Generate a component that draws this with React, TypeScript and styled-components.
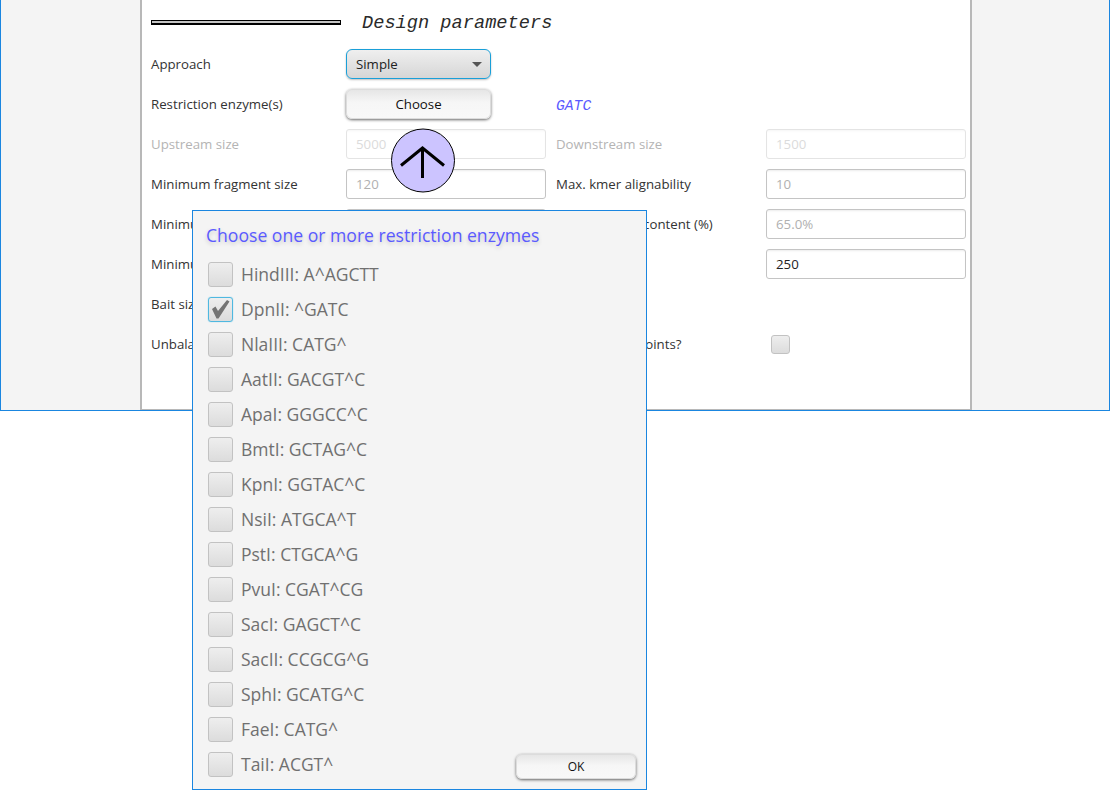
import React from 'react';
import styled, { createGlobalStyle } from 'styled-components';

const GlobalStyle = createGlobalStyle`
  html, body {
    margin: 0;
    padding: 0;
    background: #fff;
    font-family: "Open Sans", "Noto Sans", sans-serif;
  }
`;

// Styled-components

const Page = styled.div`
  position: relative;
  width: 1110px;
  height: 790px;
  overflow: hidden;
`;

const Frame = styled.div`
  box-sizing: border-box;
  height: 411px;
  padding: 0 137px 0 139px;
  background: #f4f4f4;
  border: 1px solid #1a86e0;
  border-top: 0;
`;

const Panel = styled.div`
  box-sizing: border-box;
  height: 100%;
  padding: 0 5px 0 9px;
  background: #fff;
  border: 2px solid #b8b8b8;
  border-width: 0 2px 1px;
`;

const Heading = styled.div`
  display: flex;
  align-items: center;
  gap: 21px;
  height: 44px;
`;

const Rule = styled.div`
  box-sizing: border-box;
  width: 190px;
  height: 5px;
  background: #c4c4c4;
  border: solid #000;
  border-width: 1px 1px 2px;
`;

const HeadingText = styled.span`
  padding-top: 2px;
  font: italic 18.67px "Liberation Mono", monospace;
  color: #2a2a2a;
`;

const Form = styled.div`
  display: grid;
  grid-template-columns: 195px 210px 210px 200px;
  grid-auto-rows: 40px;
  align-items: center;
`;

const Label = styled.span<{ $off?: boolean }>`
  font-size: 13.25px;
  white-space: nowrap;
  color: ${(p) => (p.$off ? '#b4b4b4' : '#333')};
`;

const Combo = styled.div`
  box-sizing: border-box;
  display: flex;
  align-items: center;
  justify-content: space-between;
  width: 145px;
  height: 30px;
  padding: 0 8px 0 9px;
  font-size: 13.25px;
  color: #222;
  background: linear-gradient(#efefef, #d6d6d6);
  border: 1px solid #1a9fd8;
  border-radius: 6px;
  box-shadow: 0 1px 2px rgba(0, 0, 0, 0.25);
`;

const Caret = styled.span`
  width: 0;
  height: 0;
  border: solid transparent;
  border-width: 5px 5.5px 0;
  border-top-color: #555;
`;

const Button = styled.button<{ $w: number; $h: number; $fs: number }>`
  box-sizing: border-box;
  width: ${(p) => p.$w}px;
  height: ${(p) => p.$h}px;
  padding: 0;
  font-family: inherit;
  font-size: ${(p) => p.$fs}px;
  color: #111;
  background: linear-gradient(#e6e6e6, #f6f6f6 45%, #f8f8f8);
  border: 1px solid #dcdcdc;
  border-radius: 6px;
  box-shadow: 0 1px 3px rgba(0, 0, 0, 0.6);
`;

const Value = styled.span`
  padding-top: 3px;
  font: italic 14.67px "Liberation Mono", monospace;
  color: #5a5aff;
`;

const Field = styled.div<{ $off?: boolean; $hint?: boolean }>`
  box-sizing: border-box;
  display: flex;
  align-items: center;
  width: 200px;
  height: 30px;
  padding: 0 9px;
  font-size: 13.25px;
  color: ${(p) => (p.$hint ? '#b0b0b0' : '#222')};
  background: #fff;
  border: 1px solid #c4c4c4;
  border-radius: 3px;
  box-shadow: inset 0 2px 2px -1px rgba(0, 0, 0, 0.08);
  opacity: ${(p) => (p.$off ? 0.45 : 1)};
`;

const Box = styled.span<{ $size: number; $on?: boolean }>`
  box-sizing: border-box;
  flex: none;
  display: flex;
  align-items: center;
  justify-content: center;
  width: ${(p) => p.$size}px;
  height: ${(p) => p.$size}px;
  background: linear-gradient(#eeeeee, #dcdcdc);
  border: 1px solid ${(p) => (p.$on ? '#4fb8e0' : '#c2c2c2')};
  border-radius: 3px;
  box-shadow: ${(p) => (p.$on ? '0 0 1px #4fb8e0' : 'none')};
`;

const SmallBoxCell = styled.div`
  padding-left: 5px;
  display: flex;
`;

const Circle = styled.div`
  position: absolute;
  left: 391px;
  top: 128px;
  width: 64px;
  height: 65px;
`;

const Dialog = styled.div`
  position: absolute;
  left: 192px;
  top: 210px;
  box-sizing: border-box;
  width: 455px;
  height: 580px;
  padding: 0 10px 0 15px;
  background: #f4f4f4;
  border: 1px solid #1a86e0;
`;

const DialogTitle = styled.div`
  height: 46px;
  padding-top: 12px;
  box-sizing: border-box;
  margin-left: -2px;
  font-size: 17.6px;
  line-height: 25px;
  white-space: nowrap;
  color: #5a5aff;
  text-shadow: 0 2px 4px rgba(0, 0, 0, 0.2);
`;

const EnzymeList = styled.div`
  display: flex;
  flex-direction: column;
`;

const EnzymeRow = styled.div`
  display: flex;
  align-items: center;
  gap: 8px;
  height: 35px;
`;

const EnzymeName = styled.span`
  padding-bottom: 2px;
  font-size: 17.5px;
  color: #707070;
`;

const OkWrap = styled.div`
  margin-left: auto;
  padding-top: 3px;
`;

// Data

const enzymes = [
  'HindIII: A^AGCTT',
  'DpnII: ^GATC',
  'NlaIII: CATG^',
  'AatII: GACGT^C',
  'ApaI: GGGCC^C',
  'BmtI: GCTAG^C',
  'KpnI: GGTAC^C',
  'NsiI: ATGCA^T',
  'PstI: CTGCA^G',
  'PvuI: CGAT^CG',
  'SacI: GAGCT^C',
  'SacII: CCGCG^G',
  'SphI: GCATG^C',
  'FaeI: CATG^',
  'TaiI: ACGT^',
];

// JSX-Component

const App: React.FC = () => {
  return (
    <Page>
      <GlobalStyle />
      <Frame>
        <Panel>
          <Heading>
            <Rule />
            <HeadingText>Design parameters</HeadingText>
          </Heading>
          <Form>
            <Label>Approach</Label>
            <Combo>
              Simple
              <Caret />
            </Combo>
            <span />
            <span />

            <Label>Restriction enzyme(s)</Label>
            <Button $w={145} $h={30} $fs={13.25}>
              Choose
            </Button>
            <Value>GATC</Value>
            <span />

            <Label $off>Upstream size</Label>
            <Field $off $hint>
              5000
            </Field>
            <Label $off>Downstream size</Label>
            <Field $off $hint>
              1500
            </Field>

            <Label>Minimum fragment size</Label>
            <Field $hint>120</Field>
            <Label>Max. kmer alignability</Label>
            <Field $hint>10</Field>

            <Label>Minimum GC content (%)</Label>
            <Field $hint>35.0%</Field>
            <Label>Maximum GC content (%)</Label>
            <Field $hint>65.0%</Field>

            <Label>Minimum bait count</Label>
            <Field $hint>2</Field>
            <Label>Margin size</Label>
            <Field>250</Field>

            <Label>Bait size</Label>
            <Field $hint>120</Field>
            <span />
            <span />

            <Label>Unbalanced</Label>
            <Box $size={19} />
            <Label>Patched viewpoints?</Label>
            <SmallBoxCell>
              <Box $size={19} />
            </SmallBoxCell>
          </Form>
        </Panel>
      </Frame>

      <Circle>
        <svg width="64" height="65" viewBox="0 0 64 65">
          <circle cx="32" cy="32.5" r="31.5" fill="#ccc4ff" stroke="#000" />
          <path d="M31.5 50V20M10 37.5L31.5 20L53 37.5" fill="none" stroke="#000" strokeWidth="3" />
        </svg>
      </Circle>

      <Dialog>
        <DialogTitle>Choose one or more restriction enzymes</DialogTitle>
        <EnzymeList>
          {enzymes.map((name, i) => (
            <EnzymeRow key={name}>
              <Box $size={25} $on={i === 1}>
                {i === 1 && (
                  <svg width="23" height="23" viewBox="0 0 23 23">
                    <path d="M3 11L6.5 8.5L9 13L18 2L20.5 3.5L9.5 20.5H7.5Z" fill="#747474" />
                  </svg>
                )}
              </Box>
              <EnzymeName>{name}</EnzymeName>
              {i === enzymes.length - 1 && (
                <OkWrap>
                  <Button $w={120} $h={25} $fs={12}>
                    OK
                  </Button>
                </OkWrap>
              )}
            </EnzymeRow>
          ))}
        </EnzymeList>
      </Dialog>
    </Page>
  );
};

export default App;
